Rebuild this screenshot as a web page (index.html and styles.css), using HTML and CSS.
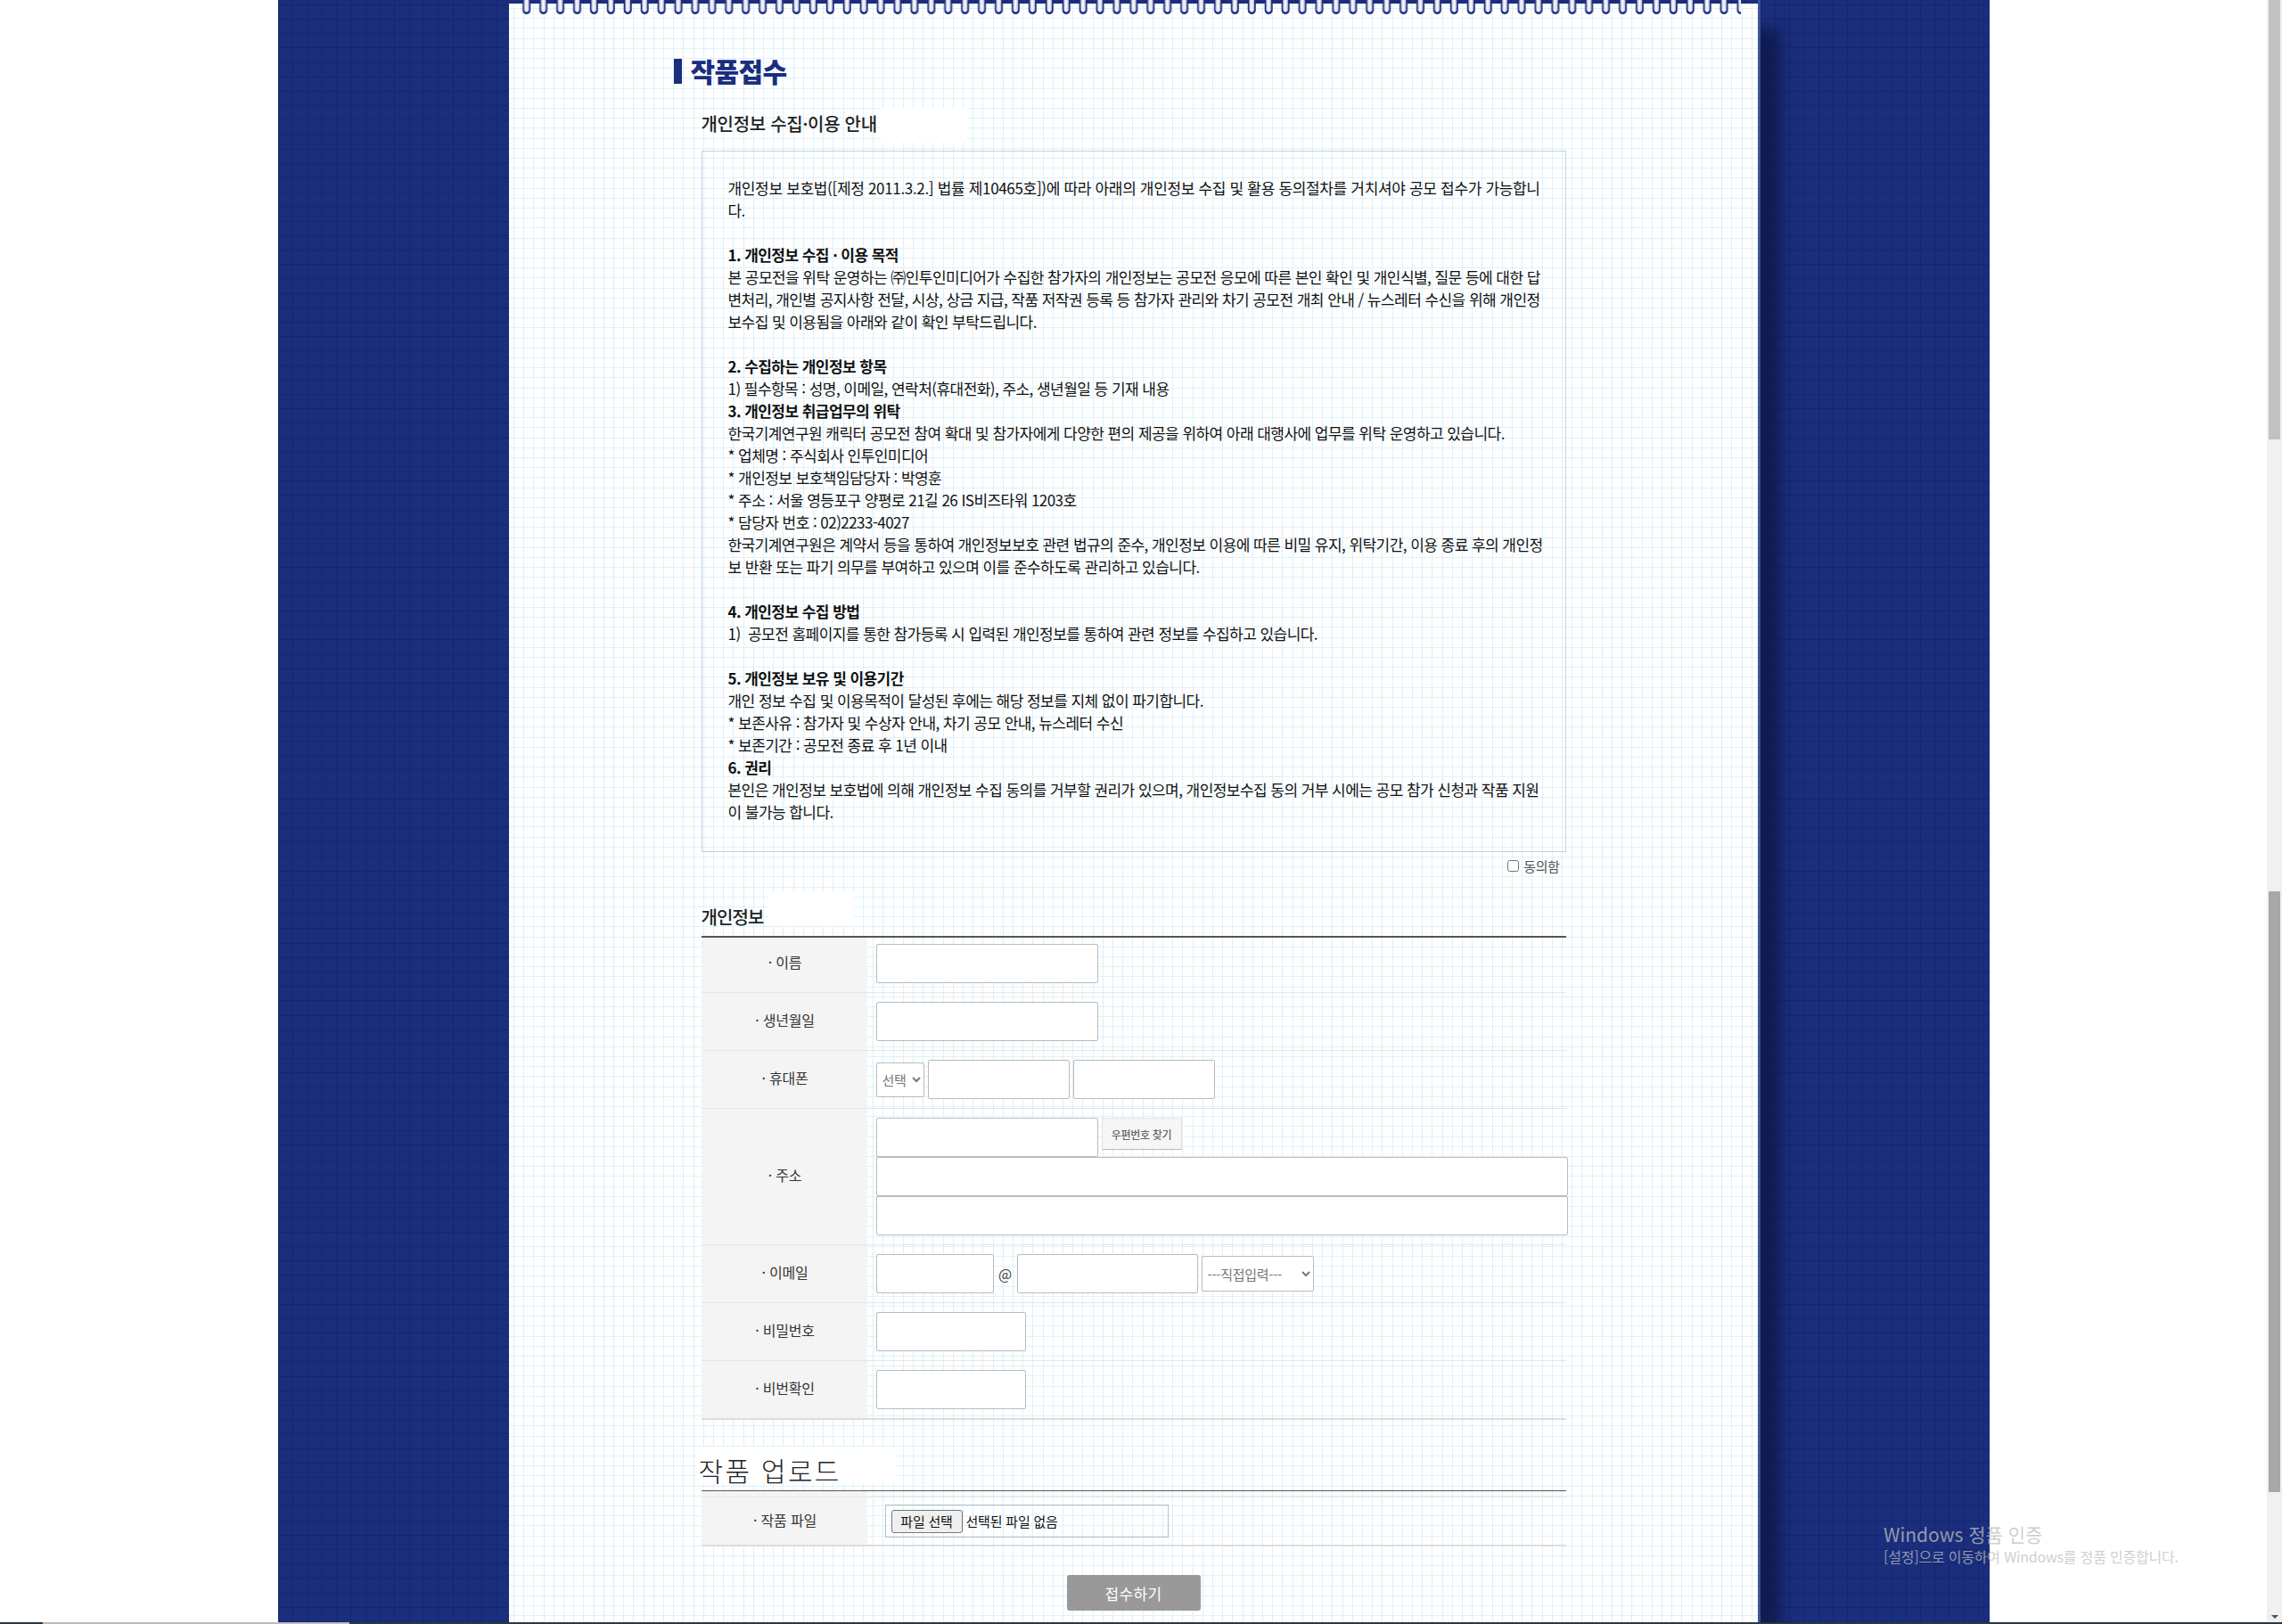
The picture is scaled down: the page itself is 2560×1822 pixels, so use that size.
FILE: index.html
```html
<!DOCTYPE html>
<html lang="ko">
  <head>
    <meta charset="UTF-8" />
    <title>작품접수</title>
    <link rel="stylesheet" href="styles.css">
  </head>
  <body>
    <div class="screen">
      <div class="window">
        <div class="page">
          <div class="backdrop">
            <div class="paper">
              <!-- spiral binding -->
              <svg class="rings" width="1401" height="17" aria-hidden="true">
                <defs>
                  <linearGradient id="tube" x1="0" x2="1" y1="0" y2="0">
                    <stop offset="0" stop-color="#c3c8de" />
                    <stop offset="0.5" stop-color="#ffffff" />
                    <stop offset="1" stop-color="#aab1d0" />
                  </linearGradient>
                  <pattern id="ring" x="10.5" y="0" width="18.92" height="17" patternUnits="userSpaceOnUse">
                    <path d="M4.7 0V11.5a4.5 4.5 0 0 0 9 0V0z" fill="#1a2e7d" />
                    <path d="M6.4 0V10.6a2.8 2.8 0 0 0 5.6 0V0z" fill="url(#tube)" />
                  </pattern>
                </defs>
                <rect x="10" y="-4" width="1372" height="21" fill="url(#ring)" />
              </svg>

              <h1 class="page-title">작품접수</h1>

              <div class="content">
                <h2 class="sub-title">개인정보 수집·이용 안내<span class="patch patch-terms"></span></h2>
                <div class="terms">
                  <span class="terms-lead">개인정보 보호법([제정 2011.3.2.] 법률 제10465호])에 따라 아래의 개인정보 수집 및 활용 동의절차를 거치셔야 공모 접수가 가능합니</span><br>
                  다.<br>
                  <br>
                  <b>1. 개인정보 수집 · 이용 목적</b><br>
                  본 공모전을 위탁 운영하는 ㈜인투인미디어가 수집한 참가자의 개인정보는 공모전 응모에 따른 본인 확인 및 개인식별, 질문 등에 대한 답<br>
                  변처리, 개인별 공지사항 전달, 시상, 상금 지급, 작품 저작권 등록 등 참가자 관리와 차기 공모전 개최 안내 / 뉴스레터 수신을 위해 개인정<br>
                  보수집 및 이용됨을 아래와 같이 확인 부탁드립니다.<br>
                  <br>
                  <b>2. 수집하는 개인정보 항목</b><br>
                  1) 필수항목 : 성명, 이메일, 연락처(휴대전화), 주소, 생년월일 등 기재 내용<br>
                  <b>3. 개인정보 취급업무의 위탁</b><br>
                  한국기계연구원 캐릭터 공모전 참여 확대 및 참가자에게 다양한 편의 제공을 위하여 아래 대행사에 업무를 위탁 운영하고 있습니다.<br>
                  * 업체명 : 주식회사 인투인미디어<br>
                  * 개인정보 보호책임담당자 : 박영훈<br>
                  * 주소 : 서울 영등포구 양평로 21길 26 IS비즈타워 1203호<br>
                  * 담당자 번호 : 02)2233-4027<br>
                  한국기계연구원은 계약서 등을 통하여 개인정보보호 관련 법규의 준수, 개인정보 이용에 따른 비밀 유지, 위탁기간, 이용 종료 후의 개인정<br>
                  보 반환 또는 파기 의무를 부여하고 있으며 이를 준수하도록 관리하고 있습니다.<br>
                  <br>
                  <b>4. 개인정보 수집 방법</b><br>
                  1)&nbsp; 공모전 홈페이지를 통한 참가등록 시 입력된 개인정보를 통하여 관련 정보를 수집하고 있습니다.<br>
                  <br>
                  <b>5. 개인정보 보유 및 이용기간</b><br>
                  개인 정보 수집 및 이용목적이 달성된 후에는 해당 정보를 지체 없이 파기합니다.<br>
                  * 보존사유 : 참가자 및 수상자 안내, 차기 공모 안내, 뉴스레터 수신<br>
                  * 보존기간 : 공모전 종료 후 1년 이내<br>
                  <b>6. 권리</b><br>
                  본인은 개인정보 보호법에 의해 개인정보 수집 동의를 거부할 권리가 있으며, 개인정보수집 동의 거부 시에는 공모 참가 신청과 작품 지원<br>
                  이 불가능 합니다.
                </div>

                <label class="agree"><input type="checkbox" />동의함</label>

                <h2 class="sub-title sub-title-info">개인정보<span class="patch patch-info"></span></h2>
                <div class="form-table">
                  <div class="form-row">
                    <div class="row-label">· 이름</div>
                    <div class="row-field"><input class="input input-md" type="text" /></div>
                  </div>
                  <div class="form-row">
                    <div class="row-label">· 생년월일</div>
                    <div class="row-field"><input class="input input-md" type="text" /></div>
                  </div>
                  <div class="form-row">
                    <div class="row-label">· 휴대폰</div>
                    <div class="row-field">
                      <select class="select select-phone"><option>선택</option></select>
                      <input class="input input-phone" type="text" />
                      <input class="input input-phone" type="text" />
                    </div>
                  </div>
                  <div class="form-row">
                    <div class="row-label">· 주소</div>
                    <div class="row-field row-field-stack">
                      <div class="zip-line">
                        <input class="input input-md" type="text" />
                        <button class="zip-button" type="button">우편번호 찾기</button>
                      </div>
                      <input class="input input-full" type="text" />
                      <input class="input input-full" type="text" />
                    </div>
                  </div>
                  <div class="form-row">
                    <div class="row-label">· 이메일</div>
                    <div class="row-field">
                      <input class="input input-mail-id" type="text" />
                      <span class="at">@</span>
                      <input class="input input-mail-host" type="text" />
                      <select class="select select-mail"><option>---직접입력---</option></select>
                    </div>
                  </div>
                  <div class="form-row">
                    <div class="row-label">· 비밀번호</div>
                    <div class="row-field"><input class="input input-pw" type="password" /></div>
                  </div>
                  <div class="form-row">
                    <div class="row-label">· 비번확인</div>
                    <div class="row-field"><input class="input input-pw" type="password" /></div>
                  </div>
                </div>

                <h2 class="upload-title">작품 업로드</h2>
                <div class="upload-table">
                  <div class="upload-label">· 작품 파일</div>
                  <div class="upload-field">
                    <div class="file-box">
                      <button class="file-button" type="button">파일 선택</button>
                      <span>선택된 파일 없음</span>
                    </div>
                  </div>
                </div>

                <div class="submit-line">
                  <button class="submit-button" type="button">접수하기</button>
                </div>
              </div>
            </div>
          </div>
        </div>

        <div class="scrollbar">
          <div class="thumb thumb-top"></div>
          <div class="thumb thumb-main"></div>
          <div class="arrow-down"></div>
        </div>
      </div>

      <div class="bottom-bar"><div class="bottom-thumb"></div></div>

      <!-- activation notice sits over everything -->
      <div class="watermark">
        <div class="watermark-title">Windows 정품 인증</div>
        <div class="watermark-text">[설정]으로 이동하여 Windows를 정품 인증합니다.</div>
      </div>
    </div>
  </body>
</html>
```

FILE: styles.css
```css
/* Reset */
* {
  box-sizing: border-box;
}

html,
body {
  margin: 0;
  height: 1822px;
  overflow: hidden;
  background: #fff;
}

body {
  font-family: "Noto Sans CJK KR", "Noto Sans", sans-serif;
  color: #222;
}

/* Browser frame */
.screen {
  position: relative;
  display: flex;
  flex-direction: column;
  height: 1822px;
}

.window {
  display: flex;
  flex: 1;
  min-height: 0;
}

.page {
  flex: 1;
  min-width: 0;
  overflow: hidden;
}

.scrollbar {
  display: flex;
  flex-direction: column;
  align-items: center;
  width: 17px;
  background: #f0f0f0;
}

.thumb {
  width: 13px;
  flex: none;
}

.thumb-top {
  height: 493px;
  background: #c1c1c1;
}

.thumb-main {
  height: 674px;
  margin-top: 507px;
  background: #a8a8a8;
}

.arrow-down {
  margin-top: auto;
  margin-bottom: 4px;
  border-left: 4px solid transparent;
  border-right: 4px solid transparent;
  border-top: 4px solid #505050;
}

.bottom-bar {
  height: 2px;
  background: #2b3840;
}

.bottom-thumb {
  width: 344px;
  height: 2px;
  margin-left: 48px;
  background: #bcbcbc;
}

/* Backgrounds */
.backdrop {
  width: 1920px;
  height: 100%;
  margin: 0 auto;
  background-color: #1a2e7d;
  background-image:
    repeating-linear-gradient(90deg, rgba(15, 28, 90, 0.4) 0 1px, transparent 1px 16.3px),
    repeating-linear-gradient(0deg, rgba(15, 28, 90, 0.4) 0 1px, transparent 1px 16.2px);
}

.paper {
  position: relative;
  width: 1404px;
  margin-left: 259px;
  height: 2200px;
  padding-top: 4px;
  border-right: 3px solid #3a5299;
  background-color: #fff;
  background-image:
    repeating-linear-gradient(90deg, transparent 0 5px, #dcf0fa 5px 6px, transparent 6px 11.2px),
    repeating-linear-gradient(180deg, transparent 0 9px, #e0f2fb 9px 10px, transparent 10px 11.2px);
  background-clip: content-box;
  box-shadow: 22px 32px 14px rgba(10, 18, 60, 0.65);
}

.rings {
  position: absolute;
  top: 0;
  left: 0;
}

/* Headings */
.page-title {
  display: flex;
  align-items: flex-start;
  gap: 10px;
  height: 28px;
  margin: 62px 0 0 185px;
  font-size: 30px;
  font-weight: 900;
  line-height: 26px;
  letter-spacing: -0.6px;
  color: #1a2e7d;
}

.page-title::before {
  content: "";
  width: 9px;
  height: 28px;
  background: #1a2e7d;
}

.content {
  width: 970px;
  margin-left: 216px;
}

.sub-title {
  display: flex;
  align-items: center;
  height: 39px;
  margin: 27px 0 9px;
  padding-bottom: 4px;
  font-size: 20px;
  font-weight: 500;
  letter-spacing: -0.3px;
  color: #222;
}

.patch {
  display: block;
  align-self: flex-start;
  background: #fff;
}

.patch-terms {
  width: 97px;
  height: 39px;
  margin-left: 4px;
}

.sub-title-info {
  align-items: flex-start;
  height: 50px;
  margin: 19px 0 0;
  padding-bottom: 0;
  line-height: 58px;
  letter-spacing: -0.9px;
}

.patch-info {
  width: 96px;
  height: 39px;
  margin-left: 5px;
}

/* Terms box */
.terms {
  padding: 28px 29px 32px;
  border: 1px solid #c0d2e2;
  font-size: 17px;
  line-height: 25px;
  letter-spacing: -0.55px;
  color: #111;
  white-space: nowrap;
}

.terms b {
  font-weight: 700;
}

.terms-lead {
  letter-spacing: -0.33px;
}

.agree {
  display: flex;
  align-items: center;
  justify-content: flex-end;
  height: 20px;
  margin-top: 5px;
  padding-right: 7px;
  font-size: 15px;
  letter-spacing: -0.4px;
  color: #555;
}

.agree input {
  width: 13px;
  height: 13px;
  margin: 0 5px 0 0;
}

/* Form table */
.form-table {
  border-top: 2px solid #555;
}

.form-row {
  display: grid;
  grid-template-columns: 186px 1fr;
  border-bottom: 1px solid #e4e6e6;
}

.form-row:first-child .row-field {
  padding-top: 7px;
}

.form-row:first-child .row-label {
  padding-bottom: 7px;
}

.form-row:last-child {
  border-bottom: 2px solid #ddd;
}

.row-label {
  display: flex;
  align-items: center;
  justify-content: center;
  padding: 0 0 4px 2px;
  background: #f4f4f4;
  font-size: 16px;
  letter-spacing: -0.2px;
  color: #333;
}

.row-field {
  display: flex;
  align-items: center;
  gap: 4px;
  padding: 10px 0 10px 10px;
}

.row-field-stack {
  flex-direction: column;
  align-items: flex-start;
  gap: 0;
}

.zip-line {
  display: flex;
  align-items: flex-start;
  gap: 4px;
}

.input {
  flex: none;
  height: 44px;
  padding: 0 6px;
  border: 1px solid #bbb;
  border-radius: 2px;
  background: #fff;
}

.input-md {
  width: 249px;
}

.input-phone {
  width: 159px;
}

.input-full {
  width: 776px;
}

.input-mail-id {
  width: 132px;
}

.input-mail-host {
  width: 203px;
}

.input-pw {
  width: 168px;
}

.select {
  flex: none;
  height: 39px;
  padding: 0 2px;
  border: 1px solid #bbb;
  border-radius: 2px;
  background: #fff;
  font-family: inherit;
  font-size: 15px;
  letter-spacing: -0.3px;
  color: #777;
}

.select-phone {
  width: 54px;
}

.select-mail {
  width: 126px;
  height: 40px;
}

.at {
  width: 18px;
  text-align: center;
  font-size: 16px;
  color: #444;
}

.zip-button {
  width: 90px;
  height: 36px;
  padding: 0;
  border: 1px solid #e2e2e2;
  border-bottom-color: #bbb;
  border-radius: 1px;
  background: #f6f6f6;
  font-family: inherit;
  font-size: 12px;
  font-weight: 500;
  letter-spacing: -0.3px;
  color: #666;
}

/* Upload */
.upload-title {
  display: block;
  width: 223px;
  height: 41px;
  margin: 30px 0 8px -6px;
  padding: 12px 0 0 3px;
  background: #fff;
  font-size: 30px;
  font-weight: 300;
  line-height: 28px;
  letter-spacing: 2.3px;
  color: #222;
}

.upload-table {
  display: grid;
  grid-template-columns: 186px 1fr;
  border-top: 1px solid #555;
  border-bottom: 2px solid #ddd;
}

.upload-label {
  display: flex;
  align-items: center;
  justify-content: center;
  height: 60px;
  padding: 3px 0 0 2px;
  background: linear-gradient(#e8e8e8, #e8e8e8) 0 6px / 100% 1px no-repeat, #f4f4f4;
  font-size: 16px;
  letter-spacing: -0.2px;
  color: #333;
}

.upload-field {
  height: 54px;
  margin-top: 6px;
  padding: 8px 0 0 20px;
  border-top: 1px solid #e8e8e8;
}

.file-box {
  display: flex;
  align-items: center;
  gap: 4px;
  width: 318px;
  height: 37px;
  padding-left: 6px;
  border: 1px solid #b6c0c8;
  font-size: 15px;
  letter-spacing: -0.2px;
  color: #111;
}

.file-button {
  width: 80px;
  height: 26px;
  padding: 0;
  border: 1px solid #767676;
  border-radius: 3px;
  background: #efefef;
  font-family: inherit;
  font-size: 15px;
  letter-spacing: -0.2px;
  color: #111;
}

.submit-line {
  display: flex;
  justify-content: center;
  margin-top: 32px;
}

.submit-button {
  width: 150px;
  height: 40px;
  padding: 0;
  border: 0;
  border-radius: 3px;
  background: #999;
  font-family: inherit;
  font-size: 17px;
  letter-spacing: 0.3px;
  color: #fff;
}

/* Windows notice */
.watermark {
  position: absolute;
  left: 2113px;
  top: 1706px;
  color: rgba(190, 190, 190, 0.75);
  white-space: nowrap;
}

.watermark-title {
  font-size: 21px;
  line-height: 30px;
}

.watermark-text {
  font-size: 16px;
  line-height: 20px;
  letter-spacing: -0.2px;
}
```
